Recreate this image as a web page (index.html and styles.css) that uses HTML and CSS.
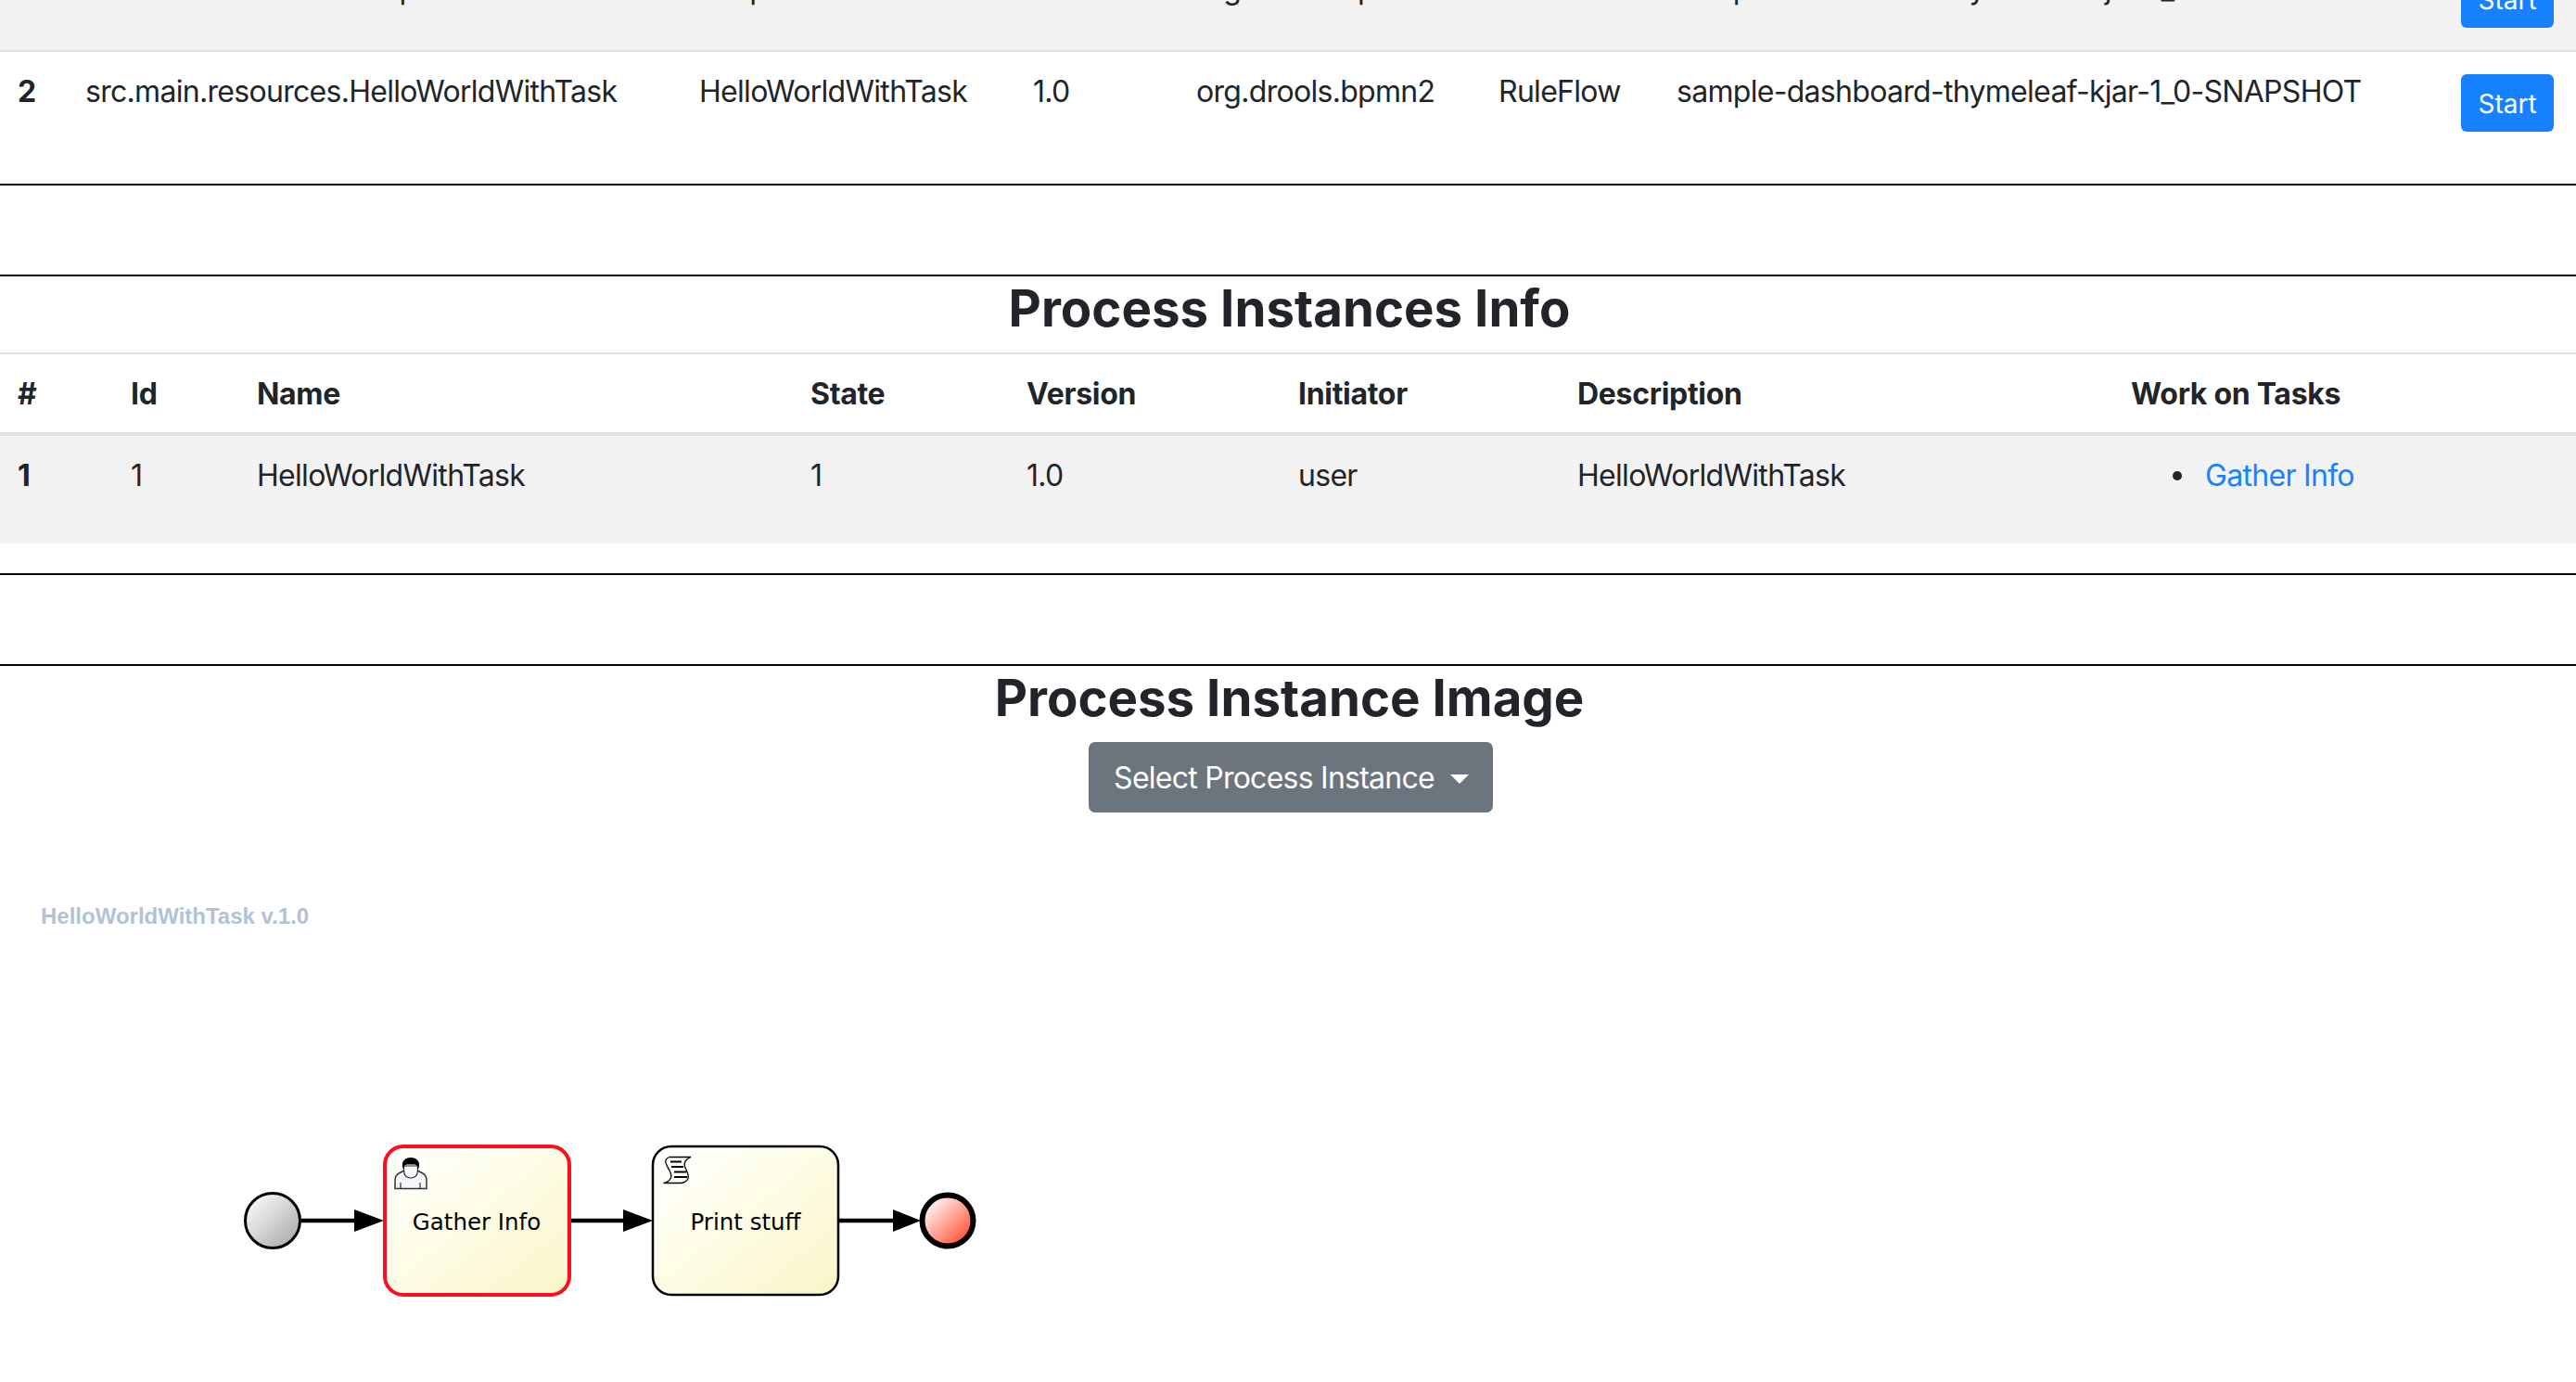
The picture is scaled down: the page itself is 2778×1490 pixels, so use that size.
FILE: index.html
```html
<!DOCTYPE html>
<html lang="en">
<head>
    <meta charset="UTF-8">
    <meta name="viewport" content="width=device-width, initial-scale=1.0">
    <title>Process Dashboard</title>
    <link rel="stylesheet" href="styles.css">
</head>
<body>
    <div class="page">
        <table class="table defs">
            <colgroup>
                <col class="d1"><col class="d2"><col class="d3"><col class="d4"><col class="d5"><col class="d6"><col class="d7"><col class="d8">
            </colgroup>
            <tbody>
                <tr class="striped first">
                    <td class="num">1</td>
                    <td>src.main.resources.SimpleProcess</td>
                    <td>SimpleProcess</td>
                    <td>1.0</td>
                    <td>org.drools.bpmn2</td>
                    <td>RuleFlow</td>
                    <td>sample-dashboard-thymeleaf-kjar-1_0-SNAPSHOT</td>
                    <td><button class="btn btn-start">Start</button></td>
                </tr>
                <tr class="second">
                    <td class="num">2</td>
                    <td>src.main.resources.HelloWorldWithTask</td>
                    <td>HelloWorldWithTask</td>
                    <td>1.0</td>
                    <td>org.drools.bpmn2</td>
                    <td>RuleFlow</td>
                    <td>sample-dashboard-thymeleaf-kjar-1_0-SNAPSHOT</td>
                    <td><button class="btn btn-start">Start</button></td>
                </tr>
            </tbody>
        </table>
        <hr class="rule">
        <hr class="rule">

        <h2 class="title">Process Instances Info</h2>
        <table class="table instances">
            <colgroup>
                <col class="i1"><col class="i2"><col class="i3"><col class="i4"><col class="i5"><col class="i6"><col class="i7"><col class="i8">
            </colgroup>
            <thead>
                <tr>
                    <th>#</th>
                    <th>Id</th>
                    <th>Name</th>
                    <th>State</th>
                    <th>Version</th>
                    <th>Initiator</th>
                    <th>Description</th>
                    <th>Work on Tasks</th>
                </tr>
            </thead>
            <tbody>
                <tr class="striped">
                    <td class="num">1</td>
                    <td>1</td>
                    <td>HelloWorldWithTask</td>
                    <td>1</td>
                    <td>1.0</td>
                    <td>user</td>
                    <td>HelloWorldWithTask</td>
                    <td>
                        <ul class="tasks">
                            <li><a href="#">Gather Info</a></li>
                        </ul>
                    </td>
                </tr>
            </tbody>
        </table>
        <hr class="rule">
        <hr class="rule">

        <h2 class="title">Process Instance Image</h2>
        <div class="dropdown">
            <button class="btn btn-select">Select Process Instance<span class="caret"></span></button>
        </div>

        <svg class="diagram" viewBox="0 876 2778 614" xmlns="http://www.w3.org/2000/svg">
            <defs>
                <linearGradient id="taskFill" x1="0" y1="0" x2="1" y2="1">
                    <stop offset="0" stop-color="#ffffff"/>
                    <stop offset="0.5" stop-color="#fdfce4"/>
                    <stop offset="1" stop-color="#faf5c8"/>
                </linearGradient>
                <linearGradient id="startFill" x1="0.1" y1="0.1" x2="0.9" y2="0.9">
                    <stop offset="0" stop-color="#fafafa"/>
                    <stop offset="1" stop-color="#acacac"/>
                </linearGradient>
                <linearGradient id="endFill" x1="0.1" y1="0.1" x2="0.9" y2="0.9">
                    <stop offset="0" stop-color="#ffffff"/>
                    <stop offset="1" stop-color="#ff4d2e"/>
                </linearGradient>
            </defs>

            <text class="diagram-name" x="44" y="996">HelloWorldWithTask v.1.0</text>

            <!-- flows -->
            <path class="flow" d="M325 1316H384"/>
            <path class="head" d="M382 1304L414 1316L382 1328Z"/>
            <path class="flow" d="M616 1316H674"/>
            <path class="head" d="M672 1304L704 1316L672 1328Z"/>
            <path class="flow" d="M905 1316H965"/>
            <path class="head" d="M963 1304L993 1316L963 1328Z"/>

            <!-- nodes -->
            <circle class="start" cx="294" cy="1316" r="29.5"/>

            <rect class="task task-active" x="415" y="1236" width="199" height="160" rx="20"/>
            <g transform="translate(425 1248)">
                <path class="user-body" d="M1 33.5V24Q1 19 6 16.5L11 14L25 14L30 16.5Q35 19 35 24V33.5Z"/>
                <path class="user-face" d="M10.5 9Q10 20 14 21Q18 23 22 21Q26 20 25.5 9Z"/>
                <path class="user-hair" d="M9.5 12C7 4 12 0 18 0C24 0 29 4 26.5 12C25 7 22 7.5 18 7.5C14 7.5 11 7 9.5 12Z"/>
                <path class="user-arm" d="M7 27V33M28 27V33"/>
            </g>
            <text class="task-label" x="514" y="1326">Gather Info</text>

            <rect class="task" x="704" y="1236" width="200" height="160" rx="20"/>
            <g transform="translate(715 1247)">
                <path class="script" d="M7 0.5H30C24 3 22 7 24 12C27 18 31 26 20 28.5H0.5C8 27 11 22 7 15C3 8 0 3 7 0.5Z"/>
                <path class="script-line" d="M8 5.5H20M9 11H22M12 16.5H25M12 22H26"/>
            </g>
            <text class="task-label" x="804" y="1326">Print stuff</text>

            <circle class="end" cx="1022" cy="1316" r="27.5"/>
        </svg>
    </div>
</body>
</html>
```

FILE: styles.css
```css
html, body {
    margin: 0;
    background: #fff;
}

body {
    font-family: Inter, "Noto Sans", sans-serif;
    font-size: 32px;
    letter-spacing: -0.7px;
    line-height: 48px;
    color: #212529;
}

/* the page is scrolled, the first row sits partly above the window */
.page {
    margin-top: -56px;
}

.table {
    width: 100%;
    border-collapse: separate;
    border-spacing: 0;
    table-layout: fixed;
}

.table td, .table th {
    padding: 19px 0 0 19px;
    text-align: left;
    vertical-align: top;
    white-space: nowrap;
}

.striped td {
    background: #f2f2f2;
}

.num {
    font-weight: 700;
}

.defs .first td {
    height: 90px;
    padding-top: 20px;
}

.defs .first .btn-start {
    margin-top: 4px;
}

.defs .second td {
    border-top: 2px solid #dee2e6;
    height: 95px;
}

.defs {
    margin-bottom: 28px;
}

.d1 { width: 73px; }
.d2 { width: 662px; }
.d3 { width: 360px; }
.d4 { width: 176px; }
.d5 { width: 326px; }
.d6 { width: 192px; }
.d7 { width: 845px; }
.d8 { width: 144px; }

.i1 { width: 122px; }
.i2 { width: 136px; }
.i3 { width: 597px; }
.i4 { width: 233px; }
.i5 { width: 293px; }
.i6 { width: 301px; }
.i7 { width: 597px; }
.i8 { width: 499px; }

.instances {
    margin-bottom: 32px;
}

.instances th {
    padding-top: 19px;
    padding-bottom: 17px;
    height: 48px;
    border-top: 2px solid #dee2e6;
    border-bottom: 4px solid #dee2e6;
    font-weight: 700;
    letter-spacing: -0.3px;
}

.instances td {
    height: 97px;
}

.rule {
    height: 2px;
    margin: 0 0 96px;
    border: 0;
    background: #000;
}

.rule + .rule {
    margin-bottom: 0;
}

.title {
    margin: 0 0 13px;
    padding-left: 3px;
    font-size: 54.6px;
    line-height: 69px;
    font-weight: 700;
    letter-spacing: normal;
    text-align: center;
}

.tasks {
    margin: 0;
    padding-left: 45px;
    list-style: none;
}

.tasks li::before {
    content: "";
    display: inline-block;
    width: 10px;
    height: 10px;
    margin-right: 25px;
    border-radius: 50%;
    background: #212529;
    vertical-align: 6px;
}

.tasks a {
    color: #1782ff;
    text-decoration: none;
}

.btn {
    border: 0;
    font-family: inherit;
    color: #fff;
}

.btn-start {
    display: block;
    width: 100px;
    height: 62px;
    margin: 5px 0 0 1px;
    padding: 2px 0 0;
    border-radius: 6px;
    background: #1782ff;
    font-size: 28px;
    letter-spacing: normal;
}

.dropdown {
    padding-left: 6px;
    text-align: center;
}

.btn-select {
    height: 76px;
    padding: 0 26px 0 27px;
    border-radius: 7px;
    background: #6c757d;
    font-size: 32px;
    letter-spacing: -0.75px;
}

.caret {
    display: inline-block;
    margin-left: 17px;
    vertical-align: 5px;
    border-top: 10px solid #fff;
    border-left: 10px solid transparent;
    border-right: 10px solid transparent;
}

.diagram {
    display: block;
    width: 2778px;
    height: 614px;
}

.diagram-name {
    font-family: "Liberation Sans", Arial, sans-serif;
    font-size: 24px;
    font-weight: 700;
    letter-spacing: normal;
    fill: #b1c2d8;
}

.flow {
    fill: none;
    stroke: #000;
    stroke-width: 4.4;
}

.head {
    fill: #000;
}

.start {
    fill: url(#startFill);
    stroke: #000;
    stroke-width: 3;
}

.end {
    fill: url(#endFill);
    stroke: #000;
    stroke-width: 6;
}

.task {
    fill: url(#taskFill);
    stroke: #000;
    stroke-width: 2.5;
}

.task-active {
    stroke: #ff0d1e;
    stroke-width: 4;
}

.task-label {
    font-family: "DejaVu Sans", sans-serif;
    font-size: 24.5px;
    letter-spacing: normal;
    text-anchor: middle;
    fill: #000;
}

.user-body {
    fill: #f4f6f9;
    stroke: #333;
    stroke-width: 1.5;
}

.user-face {
    fill: #f4f6f9;
    stroke: #222;
    stroke-width: 1.2;
}

.user-hair {
    fill: #000;
}

.user-arm {
    fill: none;
    stroke: #333;
    stroke-width: 1.2;
}

.script {
    fill: none;
    stroke: #000;
    stroke-width: 1.3;
}

.script-line {
    fill: none;
    stroke: #000;
    stroke-width: 2;
}
```
